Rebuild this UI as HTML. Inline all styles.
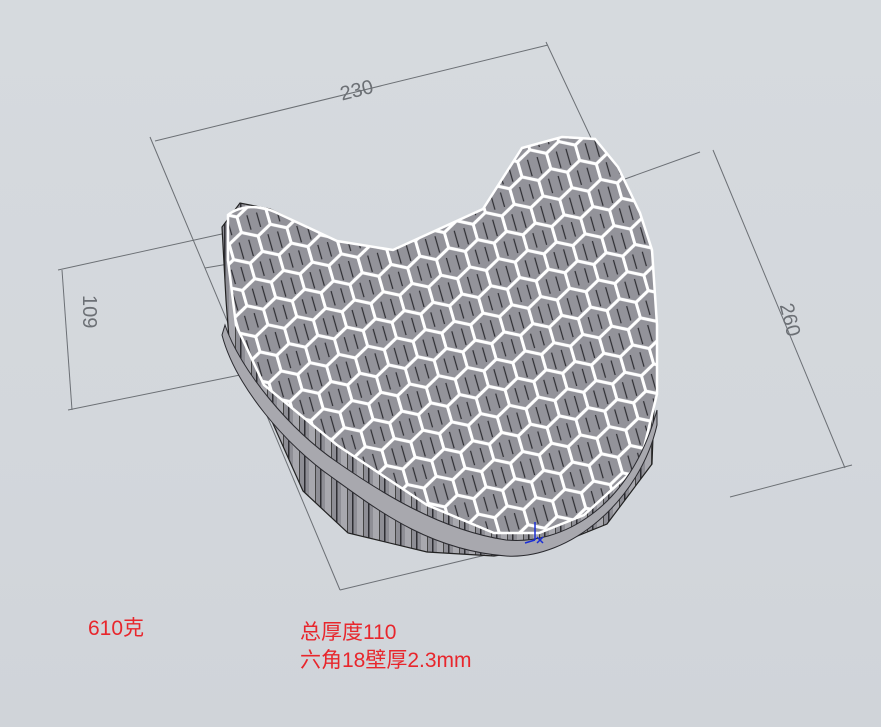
<!DOCTYPE html>
<html><head><meta charset="utf-8">
<style>
html,body{margin:0;padding:0;}
body{width:881px;height:727px;overflow:hidden;background:linear-gradient(180deg,#d6dade 0%,#d3d7dc 60%,#d0d4d9 100%);font-family:"Liberation Sans","Noto Sans CJK SC",sans-serif;}
svg{position:absolute;left:0;top:0}
.t{position:absolute;color:#e8262c;font-size:21px;line-height:28px;}
</style></head><body>
<svg width="881" height="727" viewBox="0 0 881 727">
<defs>
<pattern id="hex" width="30" height="48" patternUnits="userSpaceOnUse" patternTransform="rotate(-16) translate(3 2)">
<rect width="30" height="48" fill="#7c7c83"/>
<g fill="#93939a" stroke="#ffffff" stroke-width="3">
<path d="M15 0 L30 8 L30 24 L15 32 L0 24 L0 8Z"/>
<path d="M0 24 L15 32 L15 48 L0 56 L-15 48 L-15 32Z"/>
<path d="M30 24 L45 32 L45 48 L30 56 L15 48 L15 32Z"/>
<path d="M0 -24 L15 -16 L15 0 L0 8 L-15 0 L-15 -16Z"/>
<path d="M30 -24 L45 -16 L45 0 L30 8 L15 0 L15 -16Z"/>
</g>
<g stroke="#2e2e33" stroke-width="1.2"><line x1="10" y1="9" x2="10" y2="26"/><line x1="20" y1="9" x2="20" y2="26"/><line x1="25" y1="33" x2="25" y2="50"/><line x1="5" y1="33" x2="5" y2="50"/></g>
</pattern>
<pattern id="ribs" width="16" height="40" patternUnits="userSpaceOnUse">
<rect width="16" height="40" fill="#8e8e95"/>
<rect x="0" width="1.5" height="40" fill="#2e2e33"/>
<rect x="5" width="6" height="40" fill="#a8a8ae"/>
<rect x="11" width="1" height="40" fill="#444"/>
</pattern>
</defs>
<g stroke="#6c7075" stroke-width="1" fill="none">
<line x1="155" y1="141" x2="548" y2="45"/>
<line x1="150" y1="137" x2="340" y2="590"/>
<line x1="546" y1="42" x2="592" y2="140"/>
<line x1="700" y1="152" x2="600" y2="188"/>
<line x1="713" y1="150" x2="845" y2="468"/>
<line x1="852" y1="465" x2="730" y2="497"/>
<line x1="340" y1="590" x2="590" y2="530"/>
<line x1="62" y1="270" x2="72" y2="410"/>
<line x1="58" y1="270" x2="240" y2="230"/>
<line x1="68" y1="410" x2="240" y2="375"/>
<line x1="205" y1="268" x2="240" y2="262"/>
</g>
<text x="340" y="96" font-size="20" fill="#6c7075" transform="rotate(-14 360 90)" font-family="Liberation Sans">230</text>
<text x="775" y="325" font-size="20" fill="#6c7075" transform="rotate(76 790 318)" font-family="Liberation Sans">260</text>
<text x="68" y="300" font-size="20" fill="#6c7075" transform="rotate(90 78 305)" font-family="Liberation Sans">109</text>
<path d="M222 227 L226 300 L230 352 L270 417 L303 491 L348 533 L427 552 L494 556 L550 547 L607 524 L652 464 L657 325 L652 250 L640 213 L618 167 L595 139 L562 137 L522 148 L483 209 L393 250 L337 241 L270 209 L240 203Z" fill="url(#ribs)" stroke="#222" stroke-width="1.2"/>
<path d="M228 215 C240 205 260 205 275 212 L337 241 L393 250 L483 209 L522 148 L562 137 L595 139 L618 167 L640 213 L652 250 L657 325 L657 394 L640 464 L584 515 L539 533 L494 533 L427 505 L337 445 L264 385 L236 325 L228 260Z" fill="url(#hex)" stroke="#fff" stroke-width="2.5"/>
<path d="M225 325 C240 370 290 430 337 462 C380 492 440 530 506 540 C560 545 630 510 657 410 L657 425 C640 500 570 560 506 556 C430 550 380 512 333 478 C285 445 235 385 222 335Z" fill="#a8a8ae" stroke="#2a2a2f" stroke-width="1"/>
<g stroke="#1a2fd6" stroke-width="1.5" fill="none"><line x1="535" y1="540" x2="535" y2="522"/><line x1="535" y1="540" x2="525" y2="543"/><path d="M537 537 l6 6 M543 537 l-6 6"/></g>
</svg>
<div class="t" style="left:88px;top:615px;">610克</div>
<div class="t" style="left:300px;top:619px;">总厚度110<br>六角18壁厚2.3mm</div>
</body></html>
